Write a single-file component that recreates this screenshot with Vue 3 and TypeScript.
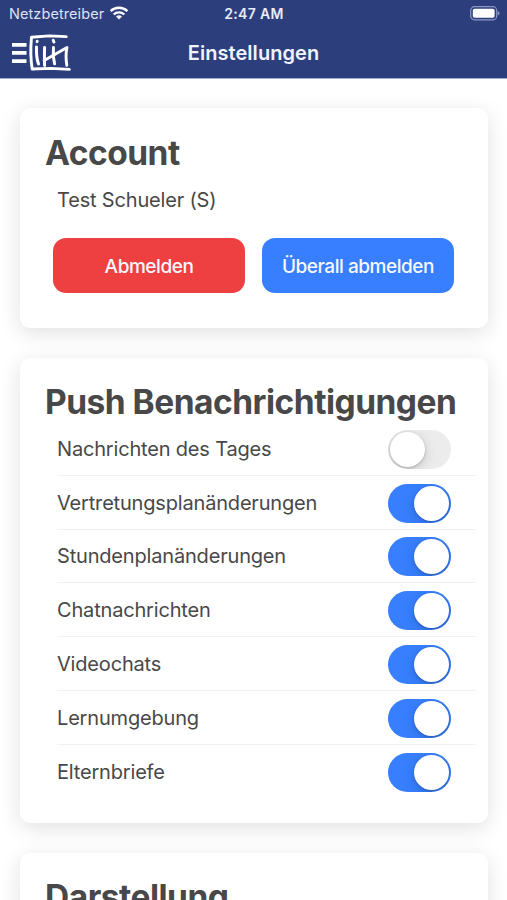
<script setup lang="ts">
import { ref } from 'vue'

interface PushOption {
  id: string
  label: string
  enabled: boolean
}

const options = ref<PushOption[]>([
  { id: 'news', label: 'Nachrichten des Tages', enabled: false },
  { id: 'substitution', label: 'Vertretungsplanänderungen', enabled: true },
  { id: 'timetable', label: 'Stundenplanänderungen', enabled: true },
  { id: 'chat', label: 'Chatnachrichten', enabled: true },
  { id: 'video', label: 'Videochats', enabled: true },
  { id: 'learning', label: 'Lernumgebung', enabled: true },
  { id: 'letters', label: 'Elternbriefe', enabled: true },
])

function toggle(option: PushOption): void {
  option.enabled = !option.enabled
}
</script>

<template>
  <div class="screen">
    <header class="header">
      <div class="status">
        <div class="carrier">
          <span class="carrier-name">Netzbetreiber</span>
          <svg class="wifi" width="20" height="14" viewBox="0 0 20 14">
            <g fill="none" stroke="#fff" stroke-width="2.4">
              <path d="M1.600 5.200a12 12 0 0 1 16.800 0" />
              <path d="M4.700 8.500a7.600 7.600 0 0 1 10.600 0" />
            </g>
            <path fill="#fff" d="M10 13.600 7 10.600a4.300 4.300 0 0 1 6 0z" />
          </svg>
        </div>
        <span class="time">2:47 AM</span>
        <svg class="battery" width="30" height="15" viewBox="0 0 30 15">
          <rect x="0.7" y="0.7" width="26" height="13.1" rx="3.8" fill="none" stroke="#8c97c4" stroke-width="1.2" />
          <rect x="2.8" y="2.8" width="21.800" height="8.900" rx="1.800" fill="#fff" />
          <path d="M27.700 5v4.600c1.200-.5 1.800-1.300 1.800-2.300s-.6-1.800-1.800-2.300z" fill="#8c97c4" />
        </svg>
      </div>
      <div class="toolbar">
        <button class="menu" type="button" aria-label="Menü">
          <svg width="60" height="38" viewBox="0 0 60 38" fill="none" stroke="#fff" stroke-linecap="round" stroke-linejoin="round">
            <path d="M1 10.900h14.500M1 18.900h14.500M1 27.100h14.500" stroke-width="3.700" stroke-linecap="butt" />
            <path d="M55.300 2.600 38 1.900 20.500 3.200C19.500 14 19.500 25 21.200 35L40 34.400 58.300 35.400" stroke-width="2.900" />
            <path d="M26.200 7.300l-.1.400M25.500 13C25.300 19 25.700 25 27.500 30" stroke-width="3" />
            <path d="M33.600 13.500C33.300 20 33.400 25 33.600 31.500" stroke-width="3" />
            <path d="M42.200 6.300l.7 1.700M42.500 13.500C41.900 19 42.300 25 43.600 29.800" stroke-width="3" />
            <path d="M33.200 26.500 56 13.500C54.800 19 54.800 25 55.800 31.300" stroke-width="2.900" />
          </svg>
        </button>
        <h1 class="page-title">Einstellungen</h1>
      </div>
    </header>

    <main class="content">
      <section class="card account">
        <h2 class="card-title">Account</h2>
        <p class="user">Test Schueler (S)</p>
        <div class="actions">
          <button class="btn danger" type="button">Abmelden</button>
          <button class="btn primary" type="button">Überall abmelden</button>
        </div>
      </section>

      <section class="card push">
        <h2 class="card-title">Push Benachrichtigungen</h2>
        <ul class="list">
          <li v-for="option in options" :key="option.id" class="row">
            <span class="label">{{ option.label }}</span>
            <button
              class="switch"
              :class="{ on: option.enabled }"
              type="button"
              role="switch"
              :aria-checked="option.enabled"
              :aria-label="option.label"
              @click="toggle(option)"
            >
              <span class="knob"></span>
            </button>
          </li>
        </ul>
      </section>

      <section class="card display">
        <h2 class="card-title">Darstellung</h2>
      </section>
    </main>
  </div>
</template>

<style>
body {
  margin: 0;
  background: #fff;
}
</style>

<style scoped>
.screen {
  box-sizing: border-box;
  height: 900px;
  overflow: hidden;
  background: #fff;
  color: #484848;
  font-family: Inter, "Liberation Sans", sans-serif;
}

button {
  margin: 0;
  padding: 0;
  border: 0;
  background: none;
  font: inherit;
}

.header {
  box-sizing: border-box;
  height: 79px;
  background: #2d3e7c;
  border-bottom: 1px solid #a5abcb;
  color: #fff;
}

.status {
  display: grid;
  grid-template-columns: 1fr auto 1fr;
  align-items: center;
  height: 27px;
  padding: 0 7px 0 9px;
}

.carrier {
  display: flex;
  align-items: center;
  gap: 5px;
}

.carrier-name {
  font-size: 14.500px;
  letter-spacing: 0.08px;
  color: #dde1f2;
}

.wifi {
  margin-top: -2px;
}

.time {
  font-size: 14px;
  font-weight: 600;
  letter-spacing: 0.35px;
  color: #e8ebf8;
  margin-right: 1px;
}

.battery {
  justify-self: end;
}

.toolbar {
  display: grid;
  grid-template-columns: 1fr auto 1fr;
  align-items: center;
  height: 51px;
  padding: 0 11px;
}

.menu {
  display: flex;
  width: 60px;
}

.page-title {
  margin: 0;
  font-size: 20px;
  font-weight: 600;
  line-height: 28px;
  letter-spacing: 0.05px;
  color: #f0f2fc;
}

.content {
  display: flex;
  flex-direction: column;
  gap: 30px;
  padding: 29px 19px 0 20px;
}

.card {
  box-sizing: border-box;
  flex: none;
  border-radius: 10px;
  background: #fff;
  box-shadow: 0 5px 21px rgba(0, 0, 0, 0.12);
}

.account {
  height: 220px;
  padding: 25px 34px 0 25px;
}

.push {
  height: 465px;
  padding: 24px 12px 0 25px;
}

.display {
  height: 220px;
  padding: 24px 25px 0;
}

.card-title {
  margin: 0;
  font-size: 33.500px;
  font-weight: 700;
  line-height: 41px;
  letter-spacing: -0.5px;
  white-space: nowrap;
}

.user {
  margin: 12px 0 0 12px;
  font-size: 20px;
  line-height: 28px;
  letter-spacing: -0.18px;
}

.actions {
  display: grid;
  grid-template-columns: 1fr 1fr;
  gap: 17px;
  margin: 24px 0 0 8px;
}

.btn {
  height: 55px;
  padding-top: 1px;
  border-radius: 13px;
  color: #f7f8ff;
  font-size: 19px;
  font-weight: 450;
  letter-spacing: -0.45px;
  white-space: nowrap;
}

.danger {
  background: #ef4041;
}

.primary {
  background: #377ffe;
}

.list {
  margin: -1px 0 0 12px;
  padding: 0;
  list-style: none;
}

.row {
  box-sizing: border-box;
  display: flex;
  align-items: center;
  justify-content: space-between;
  height: 53.800px;
  padding: 1px 25px 0 0;
  border-bottom: 1px solid #f1f1f1;
}

.row:last-child {
  border-bottom-color: transparent;
}

.label {
  font-size: 20px;
  line-height: 28px;
  letter-spacing: -0.18px;
  white-space: nowrap;
}

.switch {
  box-sizing: border-box;
  display: flex;
  align-items: center;
  flex: none;
  width: 63px;
  height: 39px;
  padding: 0 2px;
  margin-top: 1px;
  border-radius: 20px;
  background: #ececec;
  overflow: hidden;
}

.switch.on {
  justify-content: flex-end;
  background: #377ffe;
}

.knob {
  width: 35px;
  height: 35px;
  border-radius: 50%;
  background: #fff;
  box-shadow: 0 4px 14px rgba(0, 0, 0, 0.14), 0 1px 3px rgba(0, 0, 0, 0.22);
}
</style>
